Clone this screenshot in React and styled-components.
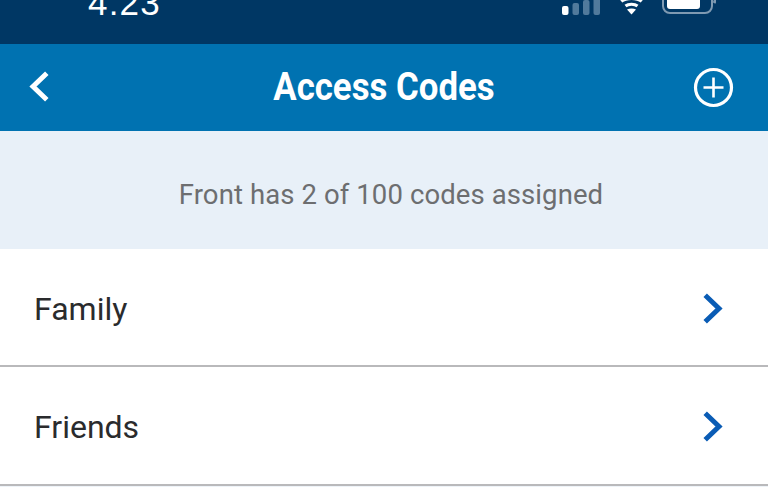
import React from 'react';
import styled, { createGlobalStyle } from 'styled-components';

const GlobalStyle = createGlobalStyle`
  * {
    margin: 0;
    padding: 0;
    box-sizing: border-box;
  }
  html, body {
    width: 768px;
    height: 487px;
    overflow: hidden;
    background: #eef3f8;
    font-family: Roboto, "Liberation Sans", sans-serif;
  }
`;

const Page = styled.div`
  width: 768px;
  height: 487px;
  overflow: hidden;
  display: flex;
  flex-direction: column;
`;

const StatusBar = styled.div`
  flex: 0 0 44px;
  height: 44px;
  background: #003764;
  overflow: hidden;
  display: flex;
  align-items: flex-end;
  justify-content: space-between;
  padding: 0 52px 28px 88px;
  color: #fff;
`;

const Clock = styled.span`
  font-size: 35px;
  line-height: 35px;
  font-weight: 500;
  letter-spacing: 1.2px;
  font-family: "Liberation Sans", sans-serif;
  margin-bottom: -4px;
`;

const StatusIcons = styled.div`
  display: flex;
  align-items: flex-end;
  gap: 15px;
`;

const Header = styled.header`
  flex: 0 0 87px;
  background: #0072b1;
  display: grid;
  grid-template-columns: 1fr auto 1fr;
  align-items: center;
  padding: 0 34px;
`;

const HeaderButton = styled.button`
  border: 0;
  background: none;
  display: flex;
  justify-self: ${props => (props.$end ? 'end' : 'start')};
  margin-left: ${props => (props.$end ? '0' : '-6px')};
  margin-top: ${props => (props.$end ? '0' : '-1px')};
`;

const Title = styled.h1`
  color: #fff;
  font-size: 38px;
  line-height: 40px;
  font-weight: 700;
  transform: scaleX(0.915);
  white-space: nowrap;
  margin-top: -2px;
`;

const Notice = styled.div`
  flex: 0 0 118px;
  background: #e8f0f8;
  display: flex;
  align-items: center;
  justify-content: center;
  padding: 9px 0 0 14px;
  color: #6d6e70;
  font-size: 27.5px;
  letter-spacing: 0.1px;
`;

const Row = styled.div`
  flex: 0 0 ${props => props.$height}px;
  background: #fff;
  border-bottom: 2px solid #b9b9bb;
  display: flex;
  align-items: center;
  justify-content: space-between;
  padding: 3px 43px 0 34px;
  color: #2a2b2d;
  font-size: 32px;
`;

const Chevron = ({ color, width, d }) => (
  <svg width="24" height="36" viewBox="0 0 24 36" fill="none">
    <path d={d} stroke={color} strokeWidth={width} strokeLinecap="square" strokeLinejoin="miter" />
  </svg>
);

const StatusGlyphs = () => (
  <StatusIcons>
    <svg width="40" height="16" viewBox="0 0 40 16">
      <rect x="1" y="6" width="6.5" height="9" rx="2" fill="#fff" />
      <rect x="11.5" y="3" width="6.5" height="12" rx="2" fill="#517a9c" />
      <rect x="22" y="0" width="6.5" height="15" rx="2" fill="#517a9c" />
      <rect x="32.5" y="-3" width="6.5" height="18" rx="2" fill="#517a9c" />
    </svg>
    <svg width="31" height="16" viewBox="0 0 31 16" fill="none" stroke="#fff">
      <path d="M5 1 C10 -3 21 -3 26 1" strokeWidth="4" />
      <path d="M9.5 6 C12.5 3.5 18.5 3.5 21.5 6" strokeWidth="3" />
      <path d="M11 9.5 C13.5 8 17.5 8 20 9.5 L15.5 14.5 Z" fill="#fff" stroke="none" />
    </svg>
    <svg width="54" height="18" viewBox="0 0 54 18" fill="none">
      <rect x="1" y="-12" width="49" height="27" rx="7" stroke="#7f9ab2" strokeWidth="2" />
      <rect x="5" y="-8" width="33" height="19" rx="3" fill="#fff" />
      <path d="M52 -4 C54 -3 54 2 52 5" stroke="#7f9ab2" strokeWidth="3" />
    </svg>
  </StatusIcons>
);

const App = () => (
  <>
    <GlobalStyle />
    <Page>
      <StatusBar>
        <Clock>4:23</Clock>
        <StatusGlyphs />
      </StatusBar>
      <Header>
        <HeaderButton aria-label="Back">
          <Chevron color="#fff" width={5} d="M17 6 L5 17.5 L17 29" />
        </HeaderButton>
        <Title>Access Codes</Title>
        <HeaderButton $end aria-label="Add">
          <svg width="41" height="41" viewBox="0 0 41 41" fill="none" stroke="#fff">
            <circle cx="20.5" cy="20.5" r="18" strokeWidth="3.2" />
            <path d="M10.5 20.5 H30.5 M20.5 10.5 V30.5" strokeWidth="2.6" />
          </svg>
        </HeaderButton>
      </Header>
      <Notice>Front has 2 of 100 codes assigned</Notice>
      <Row $height={118}>
        Family
        <Chevron color="#0a5cb5" width={5} d="M6 6 L18 17.5 L6 29" />
      </Row>
      <Row $height={119}>
        Friends
        <Chevron color="#0a5cb5" width={5} d="M6 6 L18 17.5 L6 29" />
      </Row>
    </Page>
  </>
);

export default App;
